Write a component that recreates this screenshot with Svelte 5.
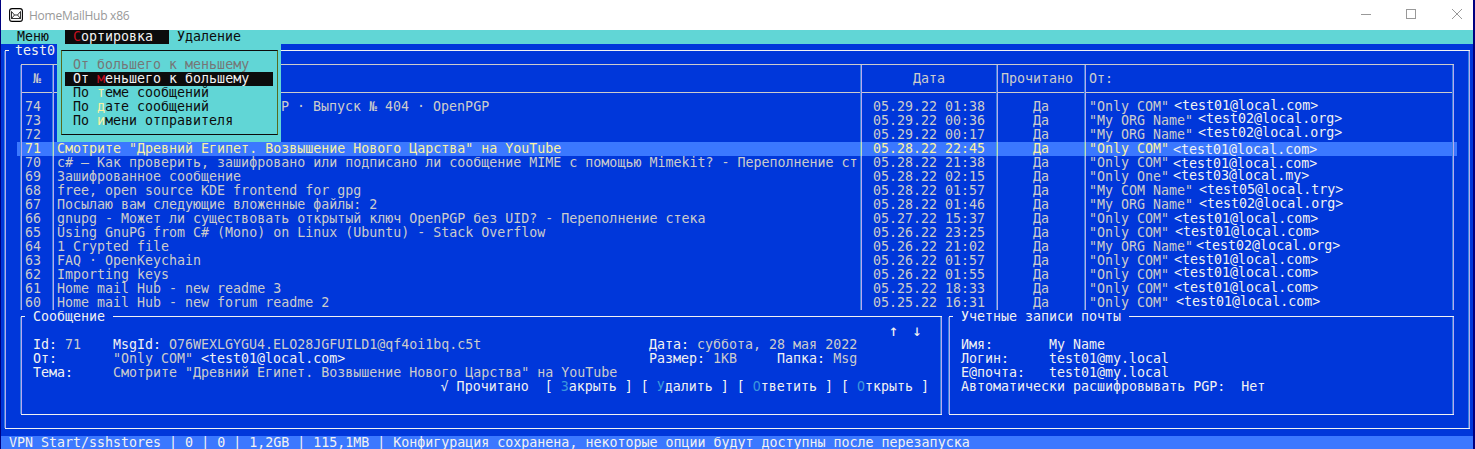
<script>
  const rows = [
    { n: 74, s: 'P · Выпуск № 404 · OpenPGP', indent: 28, d: '05.29.22 01:38', who: '"Only COM"', mail: '<test01@local.com>', dx: -3, dy: -1 },
    { n: 73, s: '', d: '05.29.22 00:36', who: '"My ORG Name"', mail: '<test02@local.org>', dx: -3, dy: -2 },
    { n: 72, s: '', d: '05.29.22 00:17', who: '"My ORG Name"', mail: '<test02@local.org>', dx: -3, dy: -2 },
    { n: 71, s: 'Смотрите "Древний Египет. Возвышение Нового Царства" на YouTube', d: '05.28.22 22:45', who: '"Only COM"', mail: '<test01@local.com>', dx: -4, dy: 1, on: true },
    { n: 70, s: 'c# – Как проверить, зашифровано или подписано ли сообщение MIME с помощью Mimekit? - Переполнение ст', d: '05.28.22 21:38', who: '"Only COM"', mail: '<test01@local.com>', dx: -4, dy: 1 },
    { n: 69, s: 'Зашифрованное сообщение', d: '05.28.22 02:15', who: '"Only One"', mail: '<test03@local.my>', dx: -4, dy: -1 },
    { n: 68, s: 'free, open source KDE frontend for gpg', d: '05.28.22 01:57', who: '"My COM Name"', mail: '<test05@local.try>', dx: -2, dy: -1 },
    { n: 67, s: 'Посылаю вам следующие вложенные файлы: 2', d: '05.28.22 01:46', who: '"My ORG Name"', mail: '<test02@local.org>', dx: -2, dy: -1 },
    { n: 66, s: 'gnupg - Может ли существовать открытый ключ OpenPGP без UID? - Переполнение стека', d: '05.27.22 15:37', who: '"Only COM"', mail: '<test01@local.com>', dx: -3, dy: 0 },
    { n: 65, s: 'Using GnuPG from C# (Mono) on Linux (Ubuntu) - Stack Overflow', d: '05.26.22 23:25', who: '"Only COM"', mail: '<test01@local.com>', dx: -2, dy: -1 },
    { n: 64, s: '1 Crypted file', d: '05.26.22 21:02', who: '"My ORG Name"', mail: '<test02@local.org>', dx: -5, dy: -1 },
    { n: 63, s: 'FAQ · OpenKeychain', d: '05.26.22 01:57', who: '"Only COM"', mail: '<test01@local.com>', dx: -3, dy: -1 },
    { n: 62, s: 'Importing keys', d: '05.26.22 01:55', who: '"Only COM"', mail: '<test01@local.com>', dx: -3, dy: -2 },
    { n: 61, s: 'Home mail Hub - new readme 3', d: '05.25.22 18:33', who: '"Only COM"', mail: '<test01@local.com>', dx: -3, dy: -1 },
    { n: 60, s: 'Home mail Hub - new forum readme 2', d: '05.25.22 16:31', who: '"Only COM"', mail: '<test01@local.com>', dx: -1, dy: -1 }
  ];
  const sorts = [
    ['От ', 'б', 'ольшего к меньшему', 'off'],
    ['От ', 'м', 'еньшего к большему', 'sel'],
    ['По ', 'т', 'еме сообщений', ''],
    ['По ', 'д', 'ате сообщений', ''],
    ['По ', 'и', 'мени отправителя', '']
  ];
  const actions = [['З', 'акрыть'], ['У', 'далить'], ['О', 'тветить'], ['О', 'ткрыть']];
  const account = [['Имя:', 'My Name'], ['Логин:', 'test01@my.local'], ['Е@почта:', 'test01@my.local']];
</script>

<div class="window">
  <header class="titlebar">
    <svg class="logo" width="14" height="14" viewBox="0 0 14 14" fill="none" stroke="#000">
      <rect x=".6" y=".6" width="12.8" height="12.8" rx="2.5" stroke-width="1.1" />
      <path d="M2.5 3.5v7h9v-7L8.5 7h-3zM2.5 10.5l3-3.5M11.5 10.5L8.5 7" stroke-width=".8" />
    </svg>
    <span class="name">HomeMailHub x86</span>
    <svg class="controls" width="104" height="12" viewBox="0 0 104 12" fill="none" stroke="#999">
      <path d="M0 6.5h10" />
      <rect x="45.5" y="1.5" width="9" height="9" />
      <path d="M91 1l10 10M101 1L91 11" />
    </svg>
  </header>

  <div class="console">
    <nav class="menubar">
      <span class="item">Меню</span>
      <span class="item open"><b>С</b>ортировка</span>
      <span class="item">Удаление</span>
      <div class="dropdown">
        <div class="box">
          {#each sorts as [a, key, b, state]}
            <div class="option {state}">{a}<b>{key}</b>{b}</div>
          {/each}
        </div>
      </div>
    </nav>

    <main class="frame outer">
      <span class="legend">test0</span>
      <section class="table">
        <div class="row head">
          <span class="c n">№</span><span class="c s"></span><span class="c d">Дата</span><span class="c r">Прочитано</span><span class="c f">От:</span>
        </div>
        <div class="body">
          {#each rows as r}
            <div class="row" class:on={r.on}>
              <span class="c n">{r.n}</span><span class="c s" style:padding-left={r.indent ? `${4 + r.indent * 8}px` : null}>{r.s}</span><span class="c d">{r.d}</span><span class="c r">Да</span><span class="c f">{r.who} <i style="transform: translate({r.dx}px, {r.dy}px)">{r.mail}</i></span>
            </div>
          {/each}
        </div>
      </section>

      <div class="panels">
        <section class="frame message">
          <span class="legend">Сообщение</span>
          <div class="arrows"><span>↑</span><span>↓</span></div>
          <div class="line"><span class="k">Id: <em>71</em></span><span class="wide">MsgId: <em>O76WEXLGYGU4.ELO28JGFUILD1@qf4oi1bq.c5t</em></span><span>Дата: <em>суббота, 28 мая 2022</em></span></div>
          <div class="line"><span class="k">От:</span><span class="wide"><em>"Only COM"</em> &lt;test01@local.com&gt;</span><span class="size">Размер: <em>1KB</em></span><span>Папка: <em>Msg</em></span></div>
          <div class="line"><span class="k">Тема:</span><em>Смотрите "Древний Египет. Возвышение Нового Царства" на YouTube</em></div>
          <div class="line buttons">
            <span class="read">√ Прочитано</span>
            {#each actions as [key, rest]}<span>[ <b>{key}</b>{rest} ]</span>{/each}
          </div>
        </section>

        <section class="frame account">
          <span class="legend">Учетные записи почты</span>
          {#each account as [k, v]}
            <div class="line"><span class="label">{k}</span><span>{v}</span></div>
          {/each}
          <div class="line"><span class="auto">Автоматически расшифровывать PGP:</span><span>Нет</span></div>
        </section>
      </div>
    </main>

    <footer class="status">VPN Start/sshstores | 0 | 0 | 1,2GB | 115,1MB | Конфигурация сохранена, некоторые опции будут доступны после перезапуска</footer>
  </div>
</div>

<style>
  :global(body) { margin: 0; overflow: hidden; }
  .window {
    --blue: #0037da;
    --edge: linear-gradient(90deg, #3a86e0 50%, #b8a8ee 50%);
    box-sizing: border-box;
    width: 1475px;
    height: 449px;
    display: flex;
    flex-direction: column;
    border: solid #000080;
    border-width: 0 2px 0 1px;
    overflow: hidden;
    background: var(--blue);
  }
  .titlebar {
    height: 30px;
    flex: none;
    display: flex;
    align-items: center;
    background: #fff;
    padding: 0 8px;
    color: #999;
    font: 12px/30px "Open Sans", "Noto Sans", sans-serif;
  }
  .name { margin-left: 6px; flex: 1; padding-top: 2px; letter-spacing: -.25px; }
  .controls { margin-top: -2px; }
  .console {
    flex: 1;
    min-height: 0;
    display: flex;
    flex-direction: column;
    color: #f2f2f2;
    font: 13.305px/14px "DejaVu Sans Mono", monospace;
  }
  .console span, .option, .status, em { white-space: pre; }
  b, em, i { font-weight: normal; font-style: normal; }
  em { color: #ccc; }
  .menubar {
    position: relative;
    height: 14px;
    flex: none;
    display: flex;
    padding-left: 8px;
    background: #61d6d6;
    color: #0c0c0c;
  }
  .item { padding: 0 8px; }
  .item:first-child { width: 32px; margin-right: 8px; }
  .item.open { width: 80px; background: #0c0c0c; color: #f2f2f2; padding-right: 16px; }
  .open b { color: #c50f1f; }
  .dropdown {
    position: absolute;
    z-index: 2;
    left: 56px;
    top: 14px;
    width: 224px;
    height: 98px;
    box-sizing: border-box;
    padding: 6px 3px 7px 4px;
    background: #61d6d6;
  }
  .box {
    box-sizing: border-box;
    height: 85px;
    border: 1px solid #0c0c0c;
    border-left-color: #566b1e;
    border-right-color: #566b1e;
    padding: 7px 4px 7px 3px;
  }
  .option { padding-left: 8px; height: 14px; }
  .option b { color: #f9f1a5; }
  .option.off, .option.off b { color: #767676; }
  .option.sel { background: #0c0c0c; color: #f2f2f2; }
  .option.sel b { color: #c50f1f; }
  .frame {
    position: relative;
    box-sizing: border-box;
    border: solid #f2f2f2;
    border-width: 1px 0;
  }
  .frame::before, .frame::after, .table::before, .table::after {
    content: "";
    position: absolute;
    z-index: 1;
    top: 0;
    bottom: 0;
    width: 2px;
    background: var(--edge);
  }
  .frame::before, .table::before { left: -1px; }
  .frame::after, .table::after { right: 0; }
  .legend {
    position: absolute;
    top: -7px;
    left: 4px;
    padding: 0 8px;
    background: var(--blue);
  }
  .outer {
    flex: none;
    margin: 6px 3px 0 4px;
    height: 379px;
    padding: 13px 16px 0;
  }
  .outer > .legend { padding-left: 6px; }
  .table {
    position: relative;
    height: 246px;
    border-top: 1px solid #ccc;
    box-sizing: border-box;
    color: #ccc;
  }
  .row { display: grid; grid-template-columns: 32px 808px 136px 88px 1fr; height: 14px; }
  .head { height: 28px; line-height: 28px; border-bottom: 1px solid #ccc; box-sizing: border-box; }
  .c { padding-left: 4px; position: relative; }
  .c:not(.n)::before {
    content: "";
    position: absolute;
    left: -1px;
    top: 0;
    bottom: 0;
    width: 2px;
    background: var(--edge);
  }
  .d { padding-left: 12px; }
  .r { padding-left: 36px; }
  .head .n { padding-left: 12px; }
  .head .d { padding-left: 52px; }
  .head .r { padding-left: 4px; }
  .body { padding-top: 7px; background: var(--edge) 31px 0 / 2px 7px no-repeat, var(--edge) 839px 0 / 2px 7px no-repeat, var(--edge) 975px 0 / 2px 7px no-repeat, var(--edge) 1063px 0 / 2px 7px no-repeat; }
  .on {
    --edge: linear-gradient(90deg, #55b0d8 50%, #c8d8c0 50%);
    background: #3b78ff;
    color: #f9f1a5;
    margin: 0 -3px 0 -4px;
    padding: 0 3px 0 4px;
  }
  i { display: inline-block; height: 14px; vertical-align: top; color: #f2f2f2; }
  .panels { display: flex; gap: 7px; padding-top: 6px; }
  .message, .account { height: 99px; }
  .message { width: 921px; padding: 7px 12px 0; }
  .account { flex: 1; padding: 21px 12px 0; }
  .line { display: flex; height: 14px; }
  .arrows { display: flex; justify-content: flex-end; gap: 14px; height: 14px; padding-right: 8px; font-size: 16px; }
  .k { width: 80px; }
  .wide { width: 536px; }
  .size { margin-right: 40px; }
  .label { width: 88px; }
  .auto { margin-right: 16px; }
  .buttons { justify-content: flex-end; gap: 8px; padding-right: 1px; }
  .read { margin-right: 8px; }
  .buttons b { color: #3a96dd; }
  .status {
    margin-top: 7px;
    flex: 1;
    padding-left: 8px;
    background: #3b78ff;
  }
</style>
